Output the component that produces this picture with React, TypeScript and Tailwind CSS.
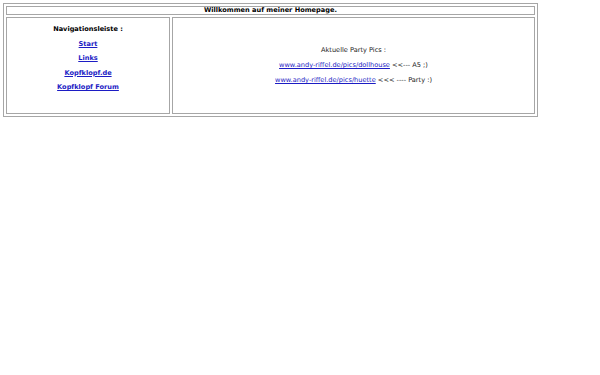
const navLinks = ['Start', 'Links', 'Kopfklopf.de', 'Kopfklopf Forum'];

const partyLinks = [
  { href: 'www.andy-riffel.de/pics/dollhouse', note: '<<--- A5 ;)' },
  { href: 'www.andy-riffel.de/pics/huette', note: '<<< ---- Party :)' }
];

export default function App() {
  return (
    <div className="min-h-[375px] w-[600px] bg-white pl-[3px] pt-[3px] font-['DejaVu_Sans',sans-serif] text-[6.6px] text-black">
      <div className="flex w-[535px] flex-col gap-[2px] border border-[#a6a6a6] p-[2px]">
        <div className="flex h-[9px] items-center justify-center border border-[#a6a6a6] font-bold leading-none">
          Willkommen auf meiner Homepage.
        </div>
        <div className="flex h-[97px] gap-[2px]">
          <div className="flex w-[164px] flex-col items-center border border-[#a6a6a6] pt-[4px] font-bold leading-[14.5px]">
            <p>Navigationsleiste :</p>
            {navLinks.map((label) => (
              <a key={label} href="#" className="text-[#1c1cc4] underline">
                {label}
              </a>
            ))}
          </div>
          <div className="flex flex-1 flex-col items-center justify-center border border-[#a6a6a6] leading-[15px] text-[#222]">
            <p>Aktuelle Party Pics :</p>
            {partyLinks.map((item) => (
              <p key={item.href}>
                <a href="#" className="text-[#1c1cc4] underline">
                  {item.href}
                </a>{' '}
                {item.note}
              </p>
            ))}
          </div>
        </div>
      </div>
    </div>
  );
}
